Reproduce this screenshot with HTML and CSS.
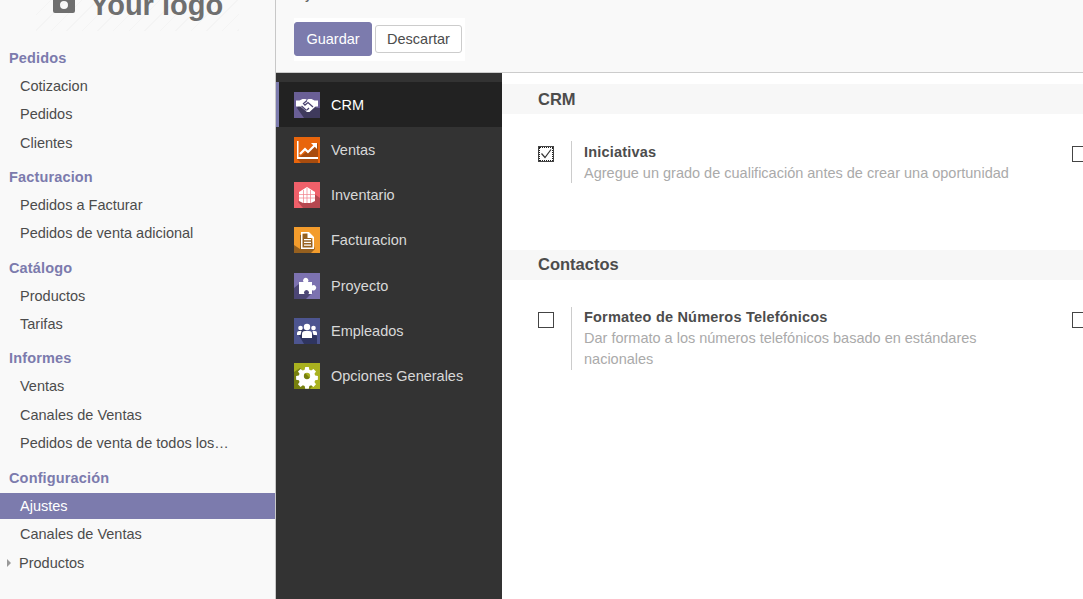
FILE: index.html
```html
<!DOCTYPE html>
<html lang="es">
<head>
    <meta charset="UTF-8">
    <meta name="viewport" content="width=device-width, initial-scale=1.0">
    <title>Ajustes</title>
    <link rel="stylesheet" href="styles.css">
</head>
<body>
    <aside class="sidebar">
        <div class="logo">
            <div class="logo-inner">
                <svg class="logo-cam" viewBox="0 0 22 20"><path fill="#6f6f6f" fill-rule="evenodd" d="M2 4h4l2-3h6l2 3h4a2 2 0 0 1 2 2v12a2 2 0 0 1-2 2H2a2 2 0 0 1-2-2V6a2 2 0 0 1 2-2zm9 4a4 4 0 1 0 0 8 4 4 0 0 0 0-8z"/></svg>
                <span>Your logo</span>
            </div>
        </div>
        <div class="menu-section">
            <div class="menu-title">Pedidos</div>
            <a class="menu-item">Cotizacion</a>
            <a class="menu-item">Pedidos</a>
            <a class="menu-item">Clientes</a>
        </div>
        <div class="menu-section">
            <div class="menu-title">Facturacion</div>
            <a class="menu-item">Pedidos a Facturar</a>
            <a class="menu-item">Pedidos de venta adicional</a>
        </div>
        <div class="menu-section">
            <div class="menu-title">Catálogo</div>
            <a class="menu-item">Productos</a>
            <a class="menu-item">Tarifas</a>
        </div>
        <div class="menu-section">
            <div class="menu-title">Informes</div>
            <a class="menu-item">Ventas</a>
            <a class="menu-item">Canales de Ventas</a>
            <a class="menu-item">Pedidos de venta de todos los…</a>
        </div>
        <div class="menu-section">
            <div class="menu-title">Configuración</div>
            <a class="menu-item active">Ajustes</a>
            <a class="menu-item">Canales de Ventas</a>
            <a class="menu-item has-caret">Productos</a>
        </div>
    </aside>

    <main class="main">
        <div class="control-panel">
            <div class="page-title">Ajustes</div>
            <div class="buttons">
                <button class="btn btn-primary">Guardar</button>
                <button class="btn btn-default">Descartar</button>
            </div>
        </div>

        <div class="settings">
            <nav class="apps">
                <a class="app active">
                    <svg class="app-icon" viewBox="0 0 26 26">
                        <rect width="26" height="26" fill="#6a5f96"/>
                        <path fill="#3f3a5c" d="M3 16l5-8 15 8 3 0v10H10z"/>
                        <path fill="#fff" d="M2 8.500h3.500l3-1.500h3l1.500 1 1.500-1h3l3 1.500H24v6h-2.500l-6 5.500h-2.500l-6.500-5.500H2z"/>
                        <path fill="none" stroke="#4a4370" stroke-width="1.300" d="M13 8.500l-3.500 3 1.500 1.500 3-2.500 5 4.500M7.500 14l5 4.500M15 16l-2 2"/>
                    </svg>
                    <span>CRM</span>
                </a>
                <a class="app">
                    <svg class="app-icon" viewBox="0 0 26 26">
                        <rect width="26" height="26" fill="#e8650c"/>
                        <path fill="#a84c0e" d="M3 22L24 6v20H7z"/>
                        <path fill="#fff" d="M3 4h1.500v16H24v2H3z"/>
                        <path fill="none" stroke="#fff" stroke-width="2.200" d="M6 17l5-5 3 3 7-7"/>
                        <path fill="#fff" d="M17 6h6v6z"/>
                    </svg>
                    <span>Ventas</span>
                </a>
                <a class="app">
                    <svg class="app-icon" viewBox="0 0 26 26">
                        <rect width="26" height="26" fill="#f0606a"/>
                        <path fill="#b5474f" d="M4 20l9-13 13 9v10H9z"/>
                        <path fill="#fff" d="M13 5l8 5v9l-4 2H9l-4-2v-9z"/>
                        <path fill="none" stroke="#f0808a" stroke-width=".7" d="M5 12.500h16M5 16h16M9.500 8v13M13 6v15M16.500 8v13"/>
                    </svg>
                    <span>Inventario</span>
                </a>
                <a class="app">
                    <svg class="app-icon" viewBox="0 0 26 26">
                        <rect width="26" height="26" fill="#f39c2c"/>
                        <path fill="#96601f" d="M6 22V8l9-3 6 17-4 4H0v-8z"/>
                        <path fill="#fff" fill-rule="evenodd" d="M7 5h8l5 5v12H7zm1.500 1.500v14h10V11h-5V6.500z"/>
                        <path fill="#fff" d="M10 12h7v1.300h-7zM10 14.700h7V16h-7zM10 17.400h7v1.300h-7z"/>
                    </svg>
                    <span>Facturacion</span>
                </a>
                <a class="app">
                    <svg class="app-icon" viewBox="0 0 26 26">
                        <rect width="26" height="26" fill="#7c72b0"/>
                        <path fill="#4c4675" d="M0 26V15l5-4 14 8-7 7z"/>
                        <path fill="#fff" fill-rule="evenodd" d="M5 9h4.500a2.700 2.700 0 1 1 4.500 0H18v3.500a2.700 2.700 0 1 1 0 4.500V21h-3.500a2.500 2.500 0 1 0-4 0H5z"/>
                    </svg>
                    <span>Proyecto</span>
                </a>
                <a class="app">
                    <svg class="app-icon" viewBox="0 0 26 26">
                        <rect width="26" height="26" fill="#4d5590"/>
                        <path fill="#2f3560" d="M3 14l4-4 16 8v8H10z"/>
                        <circle cx="13" cy="9" r="3.200" fill="#fff"/>
                        <circle cx="6.500" cy="10" r="2.300" fill="#fff"/>
                        <circle cx="19.500" cy="10" r="2.300" fill="#fff"/>
                        <path fill="#fff" d="M8 20v-4a3 3 0 0 1 3-3h4a3 3 0 0 1 3 3v4zM3 17v-2a2 2 0 0 1 2-2h2.500L6.500 17zM23 17v-2a2 2 0 0 0-2-2h-2.500l1 4z"/>
                    </svg>
                    <span>Empleados</span>
                </a>
                <a class="app">
                    <svg class="app-icon" viewBox="0 0 26 26">
                        <rect width="26" height="26" fill="#a9b11f"/>
                        <path fill="#77800f" d="M0 9l6-4 15 15-5 6H0z"/>
                        <path fill="#fff" fill-rule="evenodd" d="M11 3h4l.6 3 2 .8 2.600-1.700 2.800 2.800-1.700 2.600.8 2 3 .6v4l-3 .6-.8 2 1.700 2.600-2.800 2.800-2.600-1.700-2 .8-.6 3h-4l-.6-3-2-.8-2.600 1.700-2.800-2.800 1.700-2.600-.8-2-3-.6v-4l3-.6.8-2-1.700-2.600 2.800-2.800 2.600 1.700 2-.8zm2 6.500a3.500 3.500 0 1 0 0 7 3.500 3.500 0 0 0 0-7z" transform="translate(1.300 1.300) scale(.9)"/>
                    </svg>
                    <span>Opciones Generales</span>
                </a>
            </nav>

            <div class="content">
                <h2 class="block-title first">CRM</h2>
                <div class="setting-row first-row">
                    <div class="setting">
                        <span class="checkbox checked">
                            <svg viewBox="0 0 14 14"><path fill="none" stroke="#333" stroke-width="1.200" d="M2.500 6.500l3.500 4 6-8"/></svg>
                        </span>
                        <div class="setting-text">
                            <div class="setting-name">Iniciativas</div>
                            <div class="setting-help">Agregue un grado de cualificación antes de crear una oportunidad</div>
                        </div>
                    </div>
                    <div class="setting">
                        <span class="checkbox"></span>
                    </div>
                </div>

                <h2 class="block-title second">Contactos</h2>
                <div class="setting-row">
                    <div class="setting">
                        <span class="checkbox"></span>
                        <div class="setting-text">
                            <div class="setting-name">Formateo de Números Telefónicos</div>
                            <div class="setting-help">Dar formato a los números telefónicos basado en estándares nacionales</div>
                        </div>
                    </div>
                    <div class="setting">
                        <span class="checkbox"></span>
                    </div>
                </div>
            </div>
        </div>
    </main>
</body>
</html>
```

FILE: styles.css
```css
body {
    margin: 0;
    display: flex;
    height: 599px;
    overflow: hidden;
    font-family: "Liberation Sans", Arial, sans-serif;
    font-size: 14.500px;
    color: #4c4c4c;
    background-color: #fff;
}
.sidebar {
    width: 275px;
    flex: none;
    background-color: #f9f9f9;
    border-right: 1px solid #c8c8c8;
}
.logo {
    height: 31px;
    margin: 0 36px;
    overflow: hidden;
    background: repeating-linear-gradient(135deg, #f9f9f9 0 10px, #f4f4f4 10px 11px);
}
.logo-inner {
    display: flex;
    align-items: center;
    gap: 15px;
    margin-top: -13px;
    padding-left: 17px;
    height: 36px;
    font-size: 29px;
    font-weight: bold;
    white-space: nowrap;
    color: #6f6f6f;
}
.logo-cam {
    width: 22px;
    height: 20px;
    flex: none;
    margin-bottom: 4px;
}
.menu-section {
    margin-bottom: 7.300px;
}
.logo + .menu-section {
    margin-top: 12.500px;
}
.menu-title {
    height: 29px;
    line-height: 29px;
    padding-left: 9px;
    font-weight: bold;
    letter-spacing: .15px;
    color: #7c7bad;
}
.menu-item {
    display: block;
    height: 26px;
    line-height: 26px;
    margin-bottom: 2.500px;
    padding-left: 20px;
    white-space: nowrap;
    color: #4c4c4c;
    position: relative;
}
.menu-item.active {
    background-color: #7c7bad;
    color: #fff;
}
.menu-item.has-caret {
    padding-left: 19px;
}
.menu-item.has-caret::before {
    content: "";
    position: absolute;
    left: 7px;
    top: 9px;
    border-left: 4px solid #999;
    border-top: 4px solid transparent;
    border-bottom: 4px solid transparent;
}
.main {
    flex: 1;
    min-width: 0;
    display: flex;
    flex-direction: column;
}
.control-panel {
    flex: none;
    box-sizing: border-box;
    background-color: #f9f9f9;
    border-bottom: 1px solid #ccc;
    height: 73px;
    overflow: hidden;
}
.page-title {
    height: 18px;
    margin-top: -17px;
    padding-left: 18px;
    font-size: 18px;
    line-height: 18px;
    color: #666;
}
.buttons {
    display: inline-flex;
    gap: 3px;
    margin: 17px 0 0 18px;
    padding: 4px 3px 5px 0;
    background-color: #fff;
    align-items: center;
}
.btn {
    font-family: inherit;
    font-size: 14.500px;
    box-sizing: border-box;
    border-radius: 3px;
    padding: 0;
}
.btn-primary {
    width: 78px;
    height: 34px;
    background-color: #7c7bad;
    border: 1px solid #7c7bad;
    color: #fff;
}
.btn-default {
    width: 87px;
    height: 28px;
    background-color: #fff;
    border: 1px solid #ccc;
    color: #4c4c4c;
}
.settings {
    flex: 1;
    display: flex;
    min-height: 0;
}
.apps {
    width: 226px;
    flex: none;
    padding-top: 9px;
    background-color: #333;
    box-sizing: border-box;
}
.app {
    display: flex;
    align-items: center;
    gap: 11px;
    height: 45.250px;
    padding-left: 18px;
    box-sizing: border-box;
    color: #d8d8d8;
}
.app.active {
    background-color: #222;
    border-left: 3px solid #7c7bad;
    padding-left: 15px;
    color: #fff;
}
.app-icon {
    width: 26px;
    height: 26px;
    flex: none;
}
.content {
    flex: 1;
    min-width: 0;
    overflow: hidden;
}
.block-title {
    height: 30px;
    margin: 0;
    padding-left: 36px;
    font-size: 16.500px;
    font-weight: bold;
    color: #4c4c4c;
    background-color: #f7f7f7;
}
.block-title.first {
    margin-top: 11px;
    line-height: 31px;
}
.block-title.second {
    line-height: 29px;
}
.setting-row {
    display: flex;
    height: 136px;
    padding-top: 27px;
    box-sizing: border-box;
    align-items: flex-start;
}
.setting {
    width: 534px;
    flex: none;
    display: flex;
    align-items: flex-start;
    padding-left: 36px;
    box-sizing: border-box;
}
.checkbox {
    width: 16px;
    height: 16px;
    flex: none;
    box-sizing: border-box;
    border: 1px solid #444;
    margin-top: 5px;
    display: block;
}
.checkbox svg {
    display: block;
    width: 14px;
    height: 14px;
}
.checkbox.checked {
    outline: 1px dotted #222;
    outline-offset: -2px;
}
.setting-text {
    width: 440px;
    margin-left: 17px;
    padding-left: 12px;
    border-left: 1px solid #ccc;
    line-height: 21px;
}
.first-row .setting-name {
    padding-top: 1px;
}
.first-row .setting-help {
    margin-bottom: -1px;
}
.setting-name {
    font-weight: bold;
    letter-spacing: .2px;
    color: #4c4c4c;
}
.setting-help {
    color: #aaa;
}
```
